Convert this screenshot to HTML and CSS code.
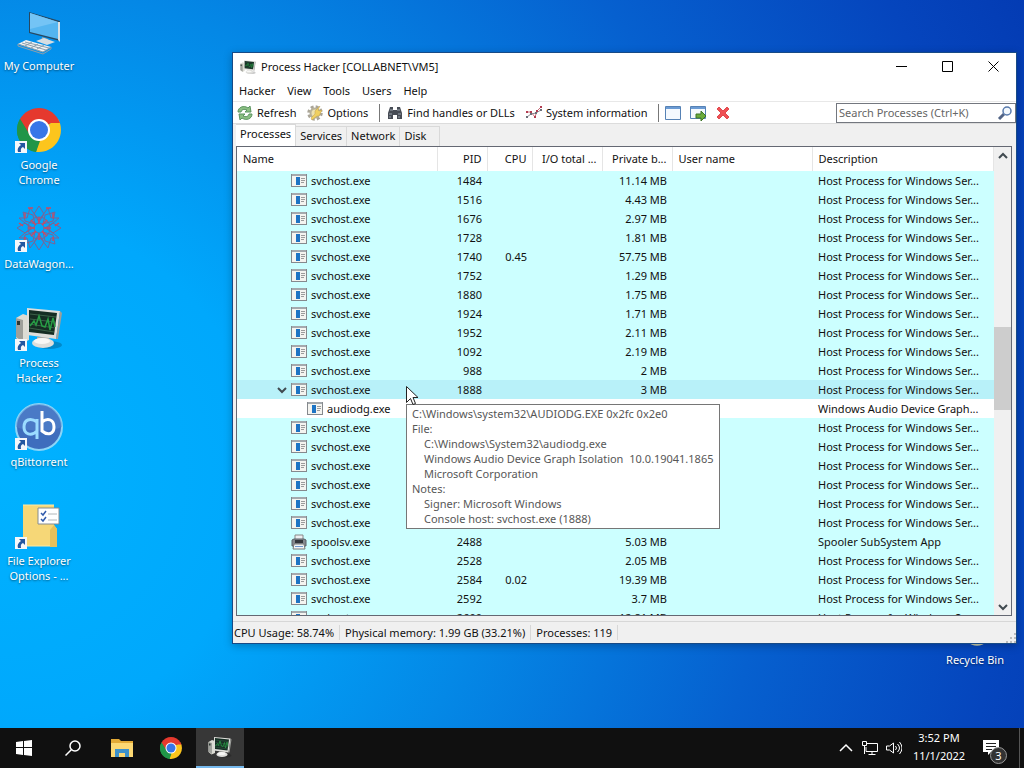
FILE: index.html
```html
<!DOCTYPE html>
<html lang="en">
<head>
    <meta charset="UTF-8">
    <meta name="viewport" content="width=device-width, initial-scale=1.0">
    <title>Process Hacker</title>
    <link rel="stylesheet" href="styles.css">
</head>
<body>
    <!-- Shared icons -->
    <svg class="sprite" aria-hidden="true">
        <symbol id="app" viewBox="0 0 16 16">
            <rect x="0.5" y="1.5" width="15" height="12" fill="#f4f4f0" stroke="#85898d"/>
            <path d="M1 2h14" stroke="#a4a9ad" stroke-width="2"/>
            <rect x="5" y="4" width="4" height="8" fill="#1d74c4"/>
            <path d="M10 5.500h4M10 7.500h4M10 9.500h3" stroke="#9b9b9b"/>
        </symbol>
        <symbol id="printer" viewBox="0 0 16 16">
            <path d="M4 1h8v6H4z" fill="#eceef0" stroke="#888"/>
            <path d="M1 6l2-1h10l2 1v6H1z" fill="#84888e" stroke="#5b5f66"/>
            <path d="M4 6h8v3H4z" fill="#33363c"/>
            <path d="M3 10h10l1 5H2z" fill="#f3f4f5" stroke="#777"/>
            <path d="M4 12.500h8" stroke="#6d97cf"/>
        </symbol>
        <symbol id="monitor" viewBox="0 0 48 48">
            <ellipse cx="34" cy="41" rx="13" ry="4" fill="#000" opacity=".2"/>
            <path d="M1 14l7-4 6 2v24l-7 3-6-5z" fill="#dcdcd4"/>
            <path d="M1 14l7 2v22l-7-5z" fill="#9ea09b"/>
            <rect x="2" y="17" width="3" height="4" fill="#2c3834"/>
            <path d="M22 33h12l1 4H22z" fill="#aaa9a4"/>
            <ellipse cx="28" cy="39" rx="11" ry="5" fill="#dededb"/>
            <ellipse cx="27" cy="37" rx="8" ry="3" fill="#f7f7f5"/>
            <path d="M12 4l33 3-4 28-29-4z" fill="#dededa"/>
            <path d="M45 7l2 2-4 26-2 0z" fill="#9d9f9b"/>
            <path d="M14 6l28 3-3 22-25-3z" fill="#152d23"/>
            <path d="M15 10l26 3M15 15l25 3M14 20l26 4M14 24l25 4" stroke="#3b6048"/>
            <path d="M15 22l4-5 2 4 3-9 3 10 3 1 3-8 2 11 3-12 2 9" fill="none" stroke="#279e45" stroke-width="1.500"/>
        </symbol>
        <symbol id="chrome" viewBox="0 0 48 48">
            <path d="M24 24L5 13A22 22 0 0 1 43 13z" fill="#e5392e"/>
            <path d="M24 24L43 13A22 22 0 0 1 24 46z" fill="#fcc51d"/>
            <path d="M24 24L24 46A22 22 0 0 1 5 13z" fill="#209548"/>
            <path d="M24 13h19l2 4H24z" fill="#e5392e"/>
            <path d="M33 30L24 46h-3l4-16z" fill="#fcc51d"/>
            <path d="M5 13l10 16 6-6-9-13z" fill="#e5392e"/>
            <path d="M5 13l10 17 10 5-4 11A22 22 0 0 1 5 13z" fill="#209548"/>
            <circle cx="24" cy="24" r="11" fill="#fff"/>
            <circle cx="24" cy="24" r="9" fill="#3876e8"/>
        </symbol>
        <symbol id="shortcut" viewBox="0 0 12 12">
            <path d="M0 0h12v12H0z" fill="#f5f7fa"/>
            <path d="M4 2h6v6L8 6C6 7 5.500 8 6 11H3C2 8 3 6 6 4z" fill="#2457a0"/>
        </symbol>
    </svg>

    <main class="desktop">
        <nav class="shortcuts" aria-label="Desktop">
            <a class="shortcut" href="#">
                <svg class="shortcut-icon" viewBox="0 0 48 48">
                    <path d="M14 5l31 9v20l-31-8z" fill="#274861"/>
                    <path d="M15 6l28 9v17l-28-7z" fill="#54b5f0"/>
                    <path d="M15 6l28 9-28 7z" fill="#74c4f5"/>
                    <path d="M43 15l2 0v20l-2-2z" fill="#d8e0e5"/>
                    <path d="M27 30l6 2v4h-7z" fill="#95a5ae"/>
                    <path d="M21 34l8-3 11 4-8 3z" fill="#d6dde1"/>
                    <path d="M3 37l8-4 25 7-8 5z" fill="#f1f3f4"/>
                    <path d="M3 37l25 8 8-5v2l-8 5-25-8zM7 36l24 7M10 35l24 6M10 39l7-4M16 41l7-4M22 42l7-4" fill="none" stroke="#8c9fac"/>
                </svg>
                <span>My Computer</span>
            </a>
            <a class="shortcut" href="#">
                <svg class="shortcut-icon"><use href="#chrome"/><use href="#shortcut" x="0" y="35" width="12" height="12"/></svg>
                <span>Google<br>Chrome</span>
            </a>
            <a class="shortcut" href="#">
                <svg class="shortcut-icon" viewBox="0 0 48 48">
                    <g fill="none" stroke="#7c6395" stroke-width="1">
                        <path d="M24 17l-5-8 5-8 5 8zM24 29l-5 8 5 8 5-8zM18 23l-8-5-8 5 8 5zM30 23l8-5 8 5-8 5z"/>
                        <path d="M20 19L10 16 8 7l10 3zM28 19l10-3 2-9-10 3zM20 27l-10 3-2 9 10-3zM28 27l10 3 2 9-10-3z"/>
                        <path d="M15 3l9 12 9-12M15 43l9-12 9 12M4 13l12 10L4 33M44 13L32 23l12 10M15 3l-3 10-8 0M33 3l3 10h8M15 43l-3-10H4M33 43l3-10h8"/>
                        <circle cx="24" cy="23" r="5"/><circle cx="24" cy="23" r="11"/>
                    </g>
                    <g stroke="#cc4961" stroke-width="1.500">
                        <path d="M24 12v7M24 28v7M13 23h7M29 23h7M16 15l5 5M32 15l-5 5M16 31l5-5M32 31l-5-5M10 8v5M38 8v5M10 36v-4M38 36v-4M13 3h5M31 3h5M4 18l4 3M44 18l-4 3"/>
                    </g>
                    <use href="#shortcut" x="0" y="35" width="12" height="12"/>
                </svg>
                <span>DataWagon...</span>
            </a>
            <a class="shortcut" href="#">
                <svg class="shortcut-icon"><use href="#monitor"/><use href="#shortcut" x="0" y="35" width="12" height="12"/></svg>
                <span>Process<br>Hacker 2</span>
            </a>
            <a class="shortcut" href="#">
                <svg class="shortcut-icon" viewBox="0 0 48 48">
                    <circle cx="24" cy="24" r="23" fill="#3e6dbd" stroke="#8cd5f7" stroke-width="2"/>
                    <path d="M1 24a23 23 0 0 1 46 0c-12 5-33 5-46 0z" fill="#5688cf" opacity=".5"/>
                    <g fill="none" stroke-width="3">
                        <path d="M22 19c-7-5-13-2-13 5s7 10 13 4M22 16v20" stroke="#9bdcff"/>
                        <path d="M27 8v21M27 19c6-5 12-2 12 5s-6 9-12 4" stroke="#fff"/>
                    </g>
                    <use href="#shortcut" x="0" y="35" width="12" height="12"/>
                </svg>
                <span>qBittorrent</span>
            </a>
            <a class="shortcut" href="#">
                <svg class="shortcut-icon" viewBox="0 0 48 48">
                    <path d="M8 3h31v20l3 4v17H8z" fill="#f6d777"/>
                    <path d="M35 28l4-5 3 4v18h-7z" fill="#e7c05a"/>
                    <path d="M8 3h31M8 44h27" stroke="#ffe9a5"/>
                    <path d="M23 6h21v16H23z" fill="#fff" stroke="#858c91"/>
                    <path d="M26 11l2 2 3-4M26 17l2 2 3-4" fill="none" stroke="#315bac" stroke-width="1.500"/>
                    <path d="M33 12h9M33 18h9" stroke="#b0b6ba"/>
                    <use href="#shortcut" x="0" y="35" width="12" height="12"/>
                </svg>
                <span>File Explorer<br>Options - ...</span>
            </a>
        </nav>

        <a class="shortcut recycle-bin" href="#">
            <svg class="shortcut-icon" viewBox="0 0 48 48"><path d="M8 4h32l-5 37c-4 5-14 5-18 0z" fill="#c9cfae"/></svg>
            <span>Recycle Bin</span>
        </a>

        <section class="window" aria-label="Process Hacker">
            <header class="title-bar">
                <svg class="icon"><use href="#monitor"/></svg>
                <h1 class="title">Process Hacker [COLLABNET\VM5]</h1>
                <button class="window-button" aria-label="Minimize"><svg viewBox="0 0 11 11"><path d="M0 5.500h11"/></svg></button>
                <button class="window-button" aria-label="Maximize"><svg viewBox="0 0 11 11"><path d="M.5.5h10v10H.5z"/></svg></button>
                <button class="window-button" aria-label="Close"><svg viewBox="0 0 11 11"><path d="M.5.5l10 10M10.500.5l-10 10"/></svg></button>
            </header>

            <nav class="menu-bar">
                <button>Hacker</button>
                <button>View</button>
                <button>Tools</button>
                <button>Users</button>
                <button>Help</button>
            </nav>

            <div class="toolbar">
                <button class="tool">
                    <svg class="icon" viewBox="0 0 16 16">
                        <path d="M1 7c0-5 6-7 10-4l2-2 1 6-6 0 2-2C7 4 5 4 4 7z" fill="#8bbf83" stroke="#5b9460"/>
                        <path d="M15 9c0 5-6 7-10 4l-2 2-1-6h6l-2 2c3 1 5 1 6-2z" fill="#8bbf83" stroke="#5b9460"/>
                    </svg>
                    Refresh
                </button>
                <button class="tool">
                    <svg class="icon" viewBox="0 0 16 16">
                        <circle cx="8" cy="8" r="6" fill="none" stroke="#aaa598" stroke-width="3.500" stroke-dasharray="2.700 2"/>
                        <circle cx="8" cy="8" r="4.500" fill="#eee2af" stroke="#b9b299" stroke-width="2"/>
                        <path d="M13 1L8 6v3l-4 4 1 2 5-4h2l3-6-3 1-1-1z" fill="#f0d060" stroke="#c2a14c" stroke-width=".5"/>
                    </svg>
                    Options
                </button>
                <span class="separator"></span>
                <button class="tool">
                    <svg class="icon" viewBox="0 0 16 16">
                        <path d="M3 2h3v3h4V2h3l2 6v6h-5v-4H6v4H1V8z" fill="#474c55"/>
                        <path d="M3 5h3M10 5h3M2 9h3M11 9h3M3 11v2M12 11v2" stroke="#9ca4ae"/>
                    </svg>
                    Find handles or DLLs
                </button>
                <button class="tool">
                    <svg class="icon" viewBox="0 0 16 16">
                        <path d="M1 7h4l4 5 2-6 4-4" fill="none" stroke="#c96a76"/>
                        <path d="M1 12l4-3 5-1 5-3" fill="none" stroke="#8d8a92"/>
                        <path d="M0 6h2v2H0zM4 6h2v2H4zM8 11h2v2H8zM10 5h2v2h-2zM14 1h2v2h-2z" fill="#b23c50"/>
                        <path d="M0 11h2v2H0zM4 8h2v2H4zM9 7h2v2H9zM14 4h2v2h-2z" fill="#6b6e78"/>
                    </svg>
                    System information
                </button>
                <span class="separator"></span>
                <button class="tool tool-small" aria-label="Find window">
                    <svg class="icon" viewBox="0 0 16 16"><path d="M.5 1.500h15v13H.5z" fill="#f4f9fe" stroke="#5682b5"/><path d="M1 3h14" stroke="#6b9bd4" stroke-width="2"/></svg>
                </button>
                <button class="tool tool-small" aria-label="Find window and thread">
                    <svg class="icon" viewBox="0 0 16 16"><path d="M.5 1.500h15v12H.5z" fill="#f4f9fe" stroke="#5682b5"/><path d="M1 3h14" stroke="#6b9bd4" stroke-width="2"/><path d="M6 9h5V6l5 5-5 5v-3H6z" fill="#6bab3c" stroke="#3d7527"/></svg>
                </button>
                <button class="tool tool-small" aria-label="Find window and kill">
                    <svg class="icon" viewBox="0 0 16 16"><path d="M2 4l2-2 4 4 4-4 2 2-4 4 4 4-2 2-4-4-4 4-2-2 4-4z" fill="#ef5055" stroke="#e04a4e"/></svg>
                </button>
                <label class="search">
                    <input type="search" placeholder="Search Processes (Ctrl+K)" aria-label="Search Processes">
                    <svg class="icon" viewBox="0 0 16 16"><path d="M7 9l-5 5" stroke="#526486" stroke-width="3"/><circle cx="10" cy="6" r="4" fill="#f3f8fd" stroke="#587aad" stroke-width="1.500"/></svg>
                </label>
            </div>

            <div class="tabs" role="tablist">
                <button class="tab active" role="tab" aria-selected="true">Processes</button>
                <button class="tab" role="tab" aria-selected="false">Services</button>
                <button class="tab" role="tab" aria-selected="false">Network</button>
                <button class="tab tab-last" role="tab" aria-selected="false">Disk</button>
            </div>

            <div class="list">
                <div class="list-view">
                    <table class="processes">
                        <colgroup>
                            <col class="col-name"><col class="col-pid"><col class="col-cpu"><col class="col-io"><col class="col-private"><col class="col-user"><col>
                        </colgroup>
                        <thead>
                            <tr><th>Name</th><th class="num">PID</th><th class="num">CPU</th><th class="num">I/O total ...</th><th class="num">Private b...</th><th>User name</th><th>Description</th></tr>
                        </thead>
                        <tbody>
                            <tr><td><span class="process"><svg class="icon"><use href="#app"/></svg>svchost.exe</span></td><td class="num">1484</td><td></td><td></td><td class="num">11.14 MB</td><td></td><td>Host Process for Windows Ser...</td></tr>
                            <tr><td><span class="process"><svg class="icon"><use href="#app"/></svg>svchost.exe</span></td><td class="num">1516</td><td></td><td></td><td class="num">4.43 MB</td><td></td><td>Host Process for Windows Ser...</td></tr>
                            <tr><td><span class="process"><svg class="icon"><use href="#app"/></svg>svchost.exe</span></td><td class="num">1676</td><td></td><td></td><td class="num">2.97 MB</td><td></td><td>Host Process for Windows Ser...</td></tr>
                            <tr><td><span class="process"><svg class="icon"><use href="#app"/></svg>svchost.exe</span></td><td class="num">1728</td><td></td><td></td><td class="num">1.81 MB</td><td></td><td>Host Process for Windows Ser...</td></tr>
                            <tr><td><span class="process"><svg class="icon"><use href="#app"/></svg>svchost.exe</span></td><td class="num">1740</td><td class="num">0.45</td><td></td><td class="num">57.75 MB</td><td></td><td>Host Process for Windows Ser...</td></tr>
                            <tr><td><span class="process"><svg class="icon"><use href="#app"/></svg>svchost.exe</span></td><td class="num">1752</td><td></td><td></td><td class="num">1.29 MB</td><td></td><td>Host Process for Windows Ser...</td></tr>
                            <tr><td><span class="process"><svg class="icon"><use href="#app"/></svg>svchost.exe</span></td><td class="num">1880</td><td></td><td></td><td class="num">1.75 MB</td><td></td><td>Host Process for Windows Ser...</td></tr>
                            <tr><td><span class="process"><svg class="icon"><use href="#app"/></svg>svchost.exe</span></td><td class="num">1924</td><td></td><td></td><td class="num">1.71 MB</td><td></td><td>Host Process for Windows Ser...</td></tr>
                            <tr><td><span class="process"><svg class="icon"><use href="#app"/></svg>svchost.exe</span></td><td class="num">1952</td><td></td><td></td><td class="num">2.11 MB</td><td></td><td>Host Process for Windows Ser...</td></tr>
                            <tr><td><span class="process"><svg class="icon"><use href="#app"/></svg>svchost.exe</span></td><td class="num">1092</td><td></td><td></td><td class="num">2.19 MB</td><td></td><td>Host Process for Windows Ser...</td></tr>
                            <tr><td><span class="process"><svg class="icon"><use href="#app"/></svg>svchost.exe</span></td><td class="num">988</td><td></td><td></td><td class="num">2 MB</td><td></td><td>Host Process for Windows Ser...</td></tr>
                            <tr class="hover"><td><span class="process parent"><svg class="chevron" viewBox="0 0 10 8"><path d="M1 2l4 4 4-4"/></svg><svg class="icon"><use href="#app"/></svg>svchost.exe</span></td><td class="num">1888</td><td></td><td></td><td class="num">3 MB</td><td></td><td>Host Process for Windows Ser...</td></tr>
                            <tr class="own"><td><span class="process child"><svg class="icon"><use href="#app"/></svg>audiodg.exe</span></td><td></td><td></td><td></td><td></td><td></td><td>Windows Audio Device Graph...</td></tr>
                            <tr><td><span class="process"><svg class="icon"><use href="#app"/></svg>svchost.exe</span></td><td></td><td></td><td></td><td></td><td></td><td>Host Process for Windows Ser...</td></tr>
                            <tr><td><span class="process"><svg class="icon"><use href="#app"/></svg>svchost.exe</span></td><td></td><td></td><td></td><td></td><td></td><td>Host Process for Windows Ser...</td></tr>
                            <tr><td><span class="process"><svg class="icon"><use href="#app"/></svg>svchost.exe</span></td><td></td><td></td><td></td><td></td><td></td><td>Host Process for Windows Ser...</td></tr>
                            <tr><td><span class="process"><svg class="icon"><use href="#app"/></svg>svchost.exe</span></td><td></td><td></td><td></td><td></td><td></td><td>Host Process for Windows Ser...</td></tr>
                            <tr><td><span class="process"><svg class="icon"><use href="#app"/></svg>svchost.exe</span></td><td></td><td></td><td></td><td></td><td></td><td>Host Process for Windows Ser...</td></tr>
                            <tr><td><span class="process"><svg class="icon"><use href="#app"/></svg>svchost.exe</span></td><td></td><td></td><td></td><td></td><td></td><td>Host Process for Windows Ser...</td></tr>
                            <tr><td><span class="process"><svg class="icon"><use href="#printer"/></svg>spoolsv.exe</span></td><td class="num">2488</td><td></td><td></td><td class="num">5.03 MB</td><td></td><td>Spooler SubSystem App</td></tr>
                            <tr><td><span class="process"><svg class="icon"><use href="#app"/></svg>svchost.exe</span></td><td class="num">2528</td><td></td><td></td><td class="num">2.05 MB</td><td></td><td>Host Process for Windows Ser...</td></tr>
                            <tr><td><span class="process"><svg class="icon"><use href="#app"/></svg>svchost.exe</span></td><td class="num">2584</td><td class="num">0.02</td><td></td><td class="num">19.39 MB</td><td></td><td>Host Process for Windows Ser...</td></tr>
                            <tr><td><span class="process"><svg class="icon"><use href="#app"/></svg>svchost.exe</span></td><td class="num">2592</td><td></td><td></td><td class="num">3.7 MB</td><td></td><td>Host Process for Windows Ser...</td></tr>
                            <tr><td><span class="process"><svg class="icon"><use href="#app"/></svg>svchost.exe</span></td><td class="num">2600</td><td></td><td></td><td class="num">12.81 MB</td><td></td><td>Host Process for Windows Ser...</td></tr>
                        </tbody>
                    </table>
                </div>
                <div class="scrollbar">
                    <button aria-label="Scroll up"><svg class="chevron" viewBox="0 0 10 8"><path d="M1 6l4-4 4 4"/></svg></button>
                    <div class="track"><div class="thumb"></div></div>
                    <button aria-label="Scroll down"><svg class="chevron" viewBox="0 0 10 8"><path d="M1 2l4 4 4-4"/></svg></button>
                </div>
            </div>

            <footer class="status-bar">
                <span>CPU Usage: 58.74%</span>
                <span>Physical memory: 1.99 GB (33.21%)</span>
                <span>Processes: 119</span>
                <svg class="grip" viewBox="0 0 10 10"><path d="M8 0h2v2H8zM8 4h2v2H8zM8 8h2v2H8zM4 4h2v2H4zM4 8h2v2H4zM0 8h2v2H0z" fill="#bcbcbc"/></svg>
            </footer>

            <div class="tooltip" role="tooltip">
                <p>C:\Windows\system32\AUDIODG.EXE 0x2fc 0x2e0</p>
                <p>File:</p>
                <p class="indent">C:\Windows\System32\audiodg.exe</p>
                <p class="indent">Windows Audio Device Graph Isolation  10.0.19041.1865</p>
                <p class="indent">Microsoft Corporation</p>
                <p>Notes:</p>
                <p class="indent">Signer: Microsoft Windows</p>
                <p class="indent">Console host: svchost.exe (1888)</p>
            </div>
            <svg class="pointer" viewBox="0 0 12 19"><path d="M.5.5v16l4-4 2.500 6 2.500-1-2.500-6h5z" fill="#fff" stroke="#222"/></svg>
        </section>
    </main>

    <footer class="taskbar">
        <button class="task" aria-label="Start"><svg class="icon" viewBox="0 0 16 16"><path d="M0 2l7-1v6H0zM8 1l8-1v7H8zM0 8h7v7l-7-1zM8 8h8v8l-8-1z" fill="#fff"/></svg></button>
        <button class="task" aria-label="Search"><svg class="icon" viewBox="0 0 16 16"><path d="M6.500 9.500L.5 15.500" stroke="#fff" stroke-width="1.500"/><circle cx="10" cy="6" r="5" fill="none" stroke="#fff" stroke-width="1.500"/></svg></button>
        <button class="task" aria-label="File Explorer">
            <svg class="task-icon" viewBox="0 0 24 24">
                <path d="M1 3h8l2 2h12v16H1z" fill="#e3aa36"/>
                <path d="M1 7h22v14H1z" fill="#fcd873"/>
                <path d="M5 13h14v8h-4v-4H9v4H5z" fill="#3d91ca"/>
            </svg>
        </button>
        <button class="task" aria-label="Google Chrome"><svg class="task-icon"><use href="#chrome"/></svg></button>
        <button class="task active" aria-label="Process Hacker"><svg class="task-icon"><use href="#monitor"/></svg></button>
        <div class="tray">
            <button class="tray-button" aria-label="Show hidden icons"><svg class="icon" viewBox="0 0 16 16"><path d="M2 11l6-6 6 6" fill="none" stroke="#fff" stroke-width="1.500"/></svg></button>
            <button class="tray-button" aria-label="Network"><svg class="icon" viewBox="0 0 16 16"><path d="M5 3.500h10.500v8H4V7M10 12v3M6.500 14.500h7M.5 1.500h4v4h-4zM2.500 6v8" fill="none" stroke="#fff"/></svg></button>
            <button class="tray-button" aria-label="Volume"><svg class="icon" viewBox="0 0 16 16"><path d="M.5 6v4h3l4 3V3l-4 3zM9.500 6q2 2 0 4M11.500 4q4 4 0 8M13.500 2q5 6 0 12" fill="none" stroke="#fff"/></svg></button>
            <button class="clock"><span>3:52 PM</span><span>11/1/2022</span></button>
            <button class="notifications" aria-label="Notifications">
                <svg class="icon" viewBox="0 0 16 16"><path d="M0 0h16v12H8l-3 3v-3H0z" fill="#fff"/><path d="M3 3.500h10M3 6.500h10M3 9.500h6" stroke="#222"/></svg>
                <span class="badge">3</span>
            </button>
        </div>
    </footer>
</body>
</html>
```
FILE: styles.css
```css
* {
    box-sizing: border-box;
}
body {
    display: flex;
    flex-direction: column;
    height: 100vh;
    margin: 0;
    overflow: hidden;
    font-family: "Noto Sans", "Open Sans", sans-serif;
    font-size: 11px;
    line-height: 15px;
    color: #111;
}
button, input {
    margin: 0;
    padding: 0;
    border: none;
    border-radius: 0;
    background: none;
    font: inherit;
    color: inherit;
}
svg {
    display: block;
    flex: none;
}
.sprite {
    position: absolute;
    width: 0;
    height: 0;
}
.icon {
    width: 16px;
    height: 16px;
}
.chevron {
    width: 10px;
    height: 8px;
    fill: none;
    stroke: #404a50;
    stroke-width: 2;
}

/* Desktop */
.desktop {
    position: relative;
    flex: 1;
    min-height: 0;
    background: radial-gradient(ellipse 116% 160% at 0 65%, #00b2ff 0%, #00a8fc 22%, #0488e6 42%, #0660cf 65%, #0545bd 85%, #0337af 100%);
}
.shortcuts {
    display: flex;
    flex-direction: column;
    width: 78px;
    padding-top: 7px;
}
.shortcut {
    display: flex;
    flex-direction: column;
    align-items: center;
    gap: 3px;
    height: 99px;
    color: #fff;
    text-align: center;
    text-decoration: none;
    text-shadow: 0 1px 2px rgba(0, 0, 0, 0.5);
    white-space: nowrap;
}
.shortcut-icon {
    width: 48px;
    height: 48px;
}
.recycle-bin {
    position: absolute;
    right: 12px;
    bottom: 28px;
    width: 74px;
}

/* Window */
.window {
    position: absolute;
    top: 52px;
    right: 7px;
    bottom: 84px;
    left: 232px;
    display: flex;
    flex-direction: column;
    border: 1px solid #174a86;
    background: #f0f0f0;
    box-shadow: 0 2px 8px rgba(0, 0, 0, 0.25);
}
.title-bar {
    display: flex;
    align-items: center;
    height: 27px;
    padding-left: 7px;
    background: #fff;
}
.title {
    flex: 1;
    margin: 0 0 0 5px;
    font-size: 11px;
    font-weight: normal;
}
.window-button {
    display: flex;
    align-items: center;
    justify-content: center;
    width: 46px;
    height: 27px;
}
.window-button svg {
    width: 11px;
    height: 11px;
    fill: none;
    stroke: #000;
}
.menu-bar {
    display: flex;
    height: 21px;
    background: #fff;
}
.menu-bar button {
    padding: 0 6px;
}
.toolbar {
    display: flex;
    align-items: center;
    gap: 3px;
    height: 23px;
    border-top: 1px solid #e8e8e8;
    border-bottom: 1px solid #dcdcdc;
    background: #fff;
}
.tool {
    display: flex;
    align-items: center;
    gap: 4px;
    padding: 0 4px;
    white-space: nowrap;
}
.tool-small {
    padding: 0 3px;
}
.separator {
    width: 1px;
    height: 18px;
    margin-left: 4px;
    background: #777;
}
.search {
    display: flex;
    align-items: center;
    width: 180px;
    height: 20px;
    margin-left: auto;
    padding: 0 2px;
    border: 1px solid #73777f;
    background: #fff;
}
.search input {
    flex: 1;
    min-width: 0;
    outline: none;
    appearance: none;
}
.search input::placeholder {
    color: #666;
}
.tabs {
    display: flex;
    align-items: flex-end;
    height: 22px;
    padding-left: 3px;
}
.tab {
    height: 20px;
    padding: 0 4px 2px;
    border: 1px solid #d9d9d9;
    border-width: 1px 1px 0 0;
    text-align: left;
}
.tab.active {
    height: 22px;
    padding-bottom: 4px;
    background: #fff;
}
.tab-last {
    width: 40px;
}

/* Process list */
.list {
    display: flex;
    flex: 1;
    min-height: 0;
    margin: 0 4px 5px 3px;
    border: 1px solid #646873;
    background: #fff;
}
.list-view {
    flex: 1;
    min-width: 0;
    overflow: hidden;
}
.processes {
    width: 100%;
    border-collapse: collapse;
    table-layout: fixed;
}
.col-name {
    width: 200px;
}
.col-pid {
    width: 50px;
}
.col-cpu {
    width: 45px;
}
.col-io, .col-private {
    width: 70px;
}
.col-user {
    width: 140px;
}
.processes th, .processes td {
    padding: 0 6px;
    text-align: left;
    white-space: nowrap;
    overflow: hidden;
}
.processes th {
    height: 24px;
    padding-bottom: 2px;
    border-right: 1px solid #e5e5e5;
    font-weight: normal;
}
.processes td {
    height: 19px;
}
.processes .num {
    padding-right: 5px;
    padding-left: 5px;
    text-align: right;
}
.processes tbody tr {
    background: #ccffff;
}
.processes tbody tr.hover {
    background: #b8f1f9;
}
.processes tbody tr.own {
    background: #fff;
}
.process {
    display: flex;
    align-items: center;
    gap: 4px;
    padding-left: 48px;
}
.process.parent {
    padding-left: 34px;
}
.process.child {
    padding-left: 64px;
}
.scrollbar {
    display: flex;
    flex-direction: column;
    width: 17px;
    background: #f0f0f0;
}
.scrollbar button {
    display: flex;
    align-items: center;
    justify-content: center;
    height: 17px;
}
.track {
    display: flex;
    flex: 1;
    flex-direction: column;
}
.track::before {
    content: "";
    flex: 163;
}
.track::after {
    content: "";
    flex: 188;
}
.thumb {
    flex: 83;
    background: #cdcdcd;
}
.status-bar {
    display: flex;
    align-items: center;
    height: 22px;
    border-top: 1px solid #d7d7d7;
}
.status-bar span {
    padding: 0 5px;
    border-right: 1px solid #d7d7d7;
    white-space: nowrap;
}
.status-bar span:first-child {
    padding-left: 1px;
}
.grip {
    align-self: flex-end;
    width: 10px;
    height: 10px;
    margin-left: auto;
}
.tooltip {
    position: absolute;
    top: 351px;
    left: 173px;
    padding: 1px 5px 2px;
    border: 1px solid #767676;
    background: #fff;
    color: #575757;
}
.tooltip p {
    margin: 0;
    white-space: pre;
}
.tooltip .indent {
    padding-left: 12px;
}
.pointer {
    position: absolute;
    top: 333px;
    left: 173px;
    width: 12px;
    height: 19px;
}

/* Taskbar */
.taskbar {
    display: flex;
    gap: 1px;
    height: 40px;
    background: #101010;
    color: #fff;
}
.task {
    display: flex;
    align-items: center;
    justify-content: center;
    width: 48px;
}
.task.active {
    border-bottom: 2px solid #76b9ed;
    background: #373737;
}
.task-icon {
    width: 24px;
    height: 24px;
}
.tray {
    display: flex;
    align-items: center;
    margin-left: auto;
    padding-right: 4px;
}
.tray-button {
    display: flex;
    justify-content: center;
    width: 24px;
}
.clock {
    display: flex;
    flex-direction: column;
    align-items: center;
    gap: 3px;
    width: 66px;
    padding-bottom: 3px;
}
.notifications {
    position: relative;
    display: flex;
    align-items: center;
    height: 40px;
    width: 48px;
    padding-left: 11px;
    border-right: 1px solid #555;
}
.badge {
    position: absolute;
    top: 19px;
    left: 18px;
    width: 17px;
    height: 17px;
    border: 1px solid #999;
    border-radius: 50%;
    background: #333;
    text-align: center;
}
```
